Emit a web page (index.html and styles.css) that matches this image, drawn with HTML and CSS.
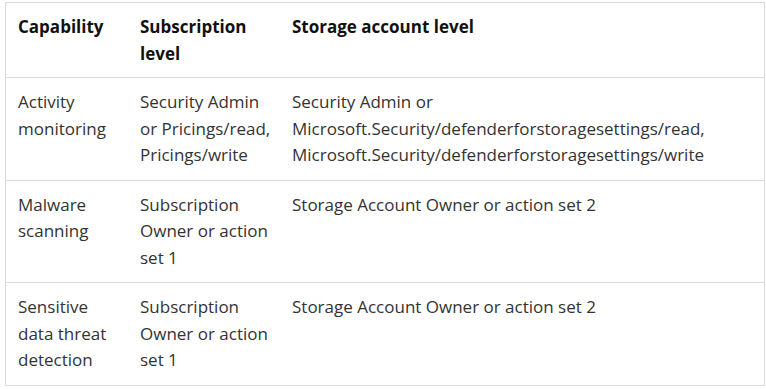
FILE: index.html
```html
<!DOCTYPE html>
<html>
<head>
    <title>Storage permissions</title>
    <meta name="viewport" content="width=device-width" />
    <link rel="stylesheet" href="styles.css">
</head>
<body>

<table class="perm-table">
    <thead>
        <tr>
            <th class="col-cap">Capability</th>
            <th class="col-sub">Subscription level</th>
            <th>Storage account level</th>
        </tr>
    </thead>
    <tbody>
        <tr>
            <td>Activity monitoring</td>
            <td>Security Admin or Pricings/read, Pricings/write</td>
            <td>Security Admin or<br>Microsoft.Security/defenderforstoragesettings/read,<br>Microsoft.Security/defenderforstoragesettings/write</td>
        </tr>
        <tr>
            <td>Malware scanning</td>
            <td>Subscription Owner or action set 1</td>
            <td>Storage Account Owner or action set 2</td>
        </tr>
        <tr>
            <td>Sensitive data threat detection</td>
            <td>Subscription Owner or action set 1</td>
            <td>Storage Account Owner or action set 2</td>
        </tr>
    </tbody>
</table>

</body>
</html>
```

FILE: styles.css
```css
body, html {
    margin: 0;
    background: #fff;
}

body {
    padding: 2px 2px 0 5px;
    font-family: "Open Sans", "Noto Sans", sans-serif;
    font-size: 17px;
    color: #333;
}

.perm-table {
    width: 760px;
    border-collapse: collapse;
    border: 1px solid #d9d9d9;
    table-layout: fixed;
}

.perm-table th,
.perm-table td {
    text-align: left;
    vertical-align: top;
    padding: 11px 12px 11px 12px;
    line-height: 26.5px;
    border-bottom: 1px solid #dcdcdc;
}

.perm-table th {
    color: #111;
    font-weight: 700;
    padding-bottom: 10px;
}

/* second column runs close to the third, as in the docs table */
.perm-table th:nth-child(2),
.perm-table td:nth-child(2) {
    padding-right: 1px;
}

.col-cap {
    width: 98px;
}

.col-sub {
    width: 139px;
}
```
